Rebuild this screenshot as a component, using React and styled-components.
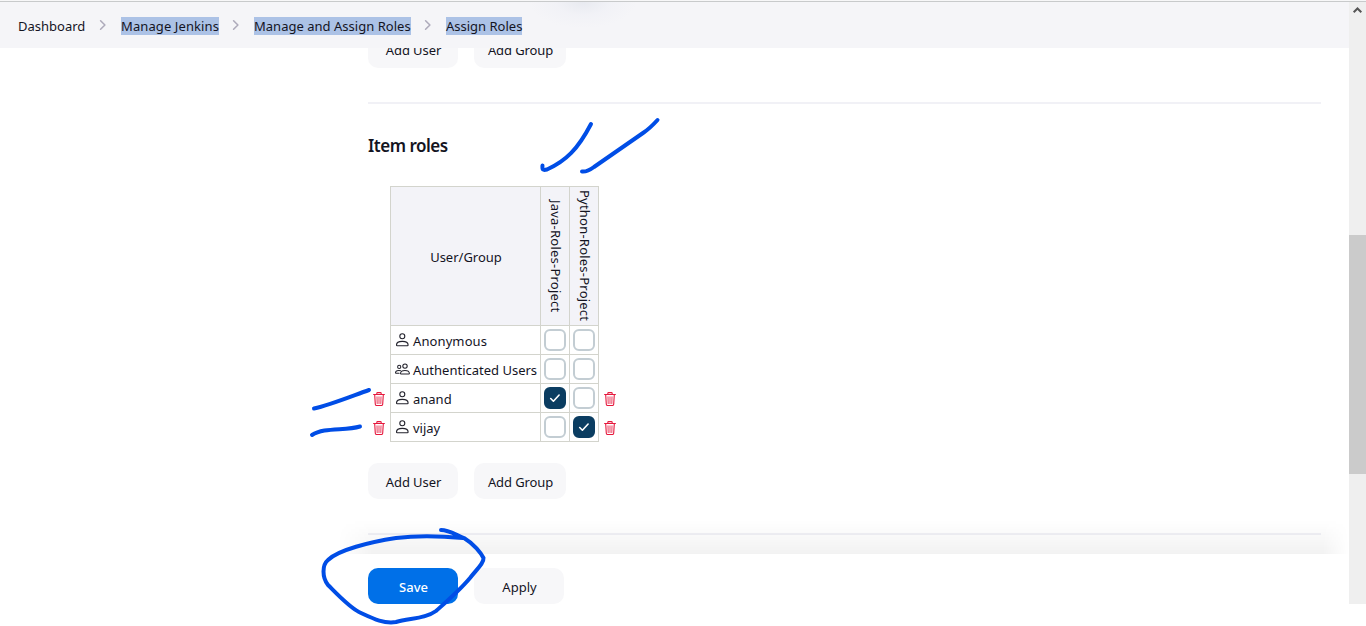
import React from 'react';
import styled, { createGlobalStyle, css } from 'styled-components';

const GlobalStyle = createGlobalStyle`
  *, *::before, *::after { box-sizing: border-box; }
  body {
    margin: 0;
    background: #fff;
    color: #14141f;
    font-family: "Noto Sans", "Open Sans", sans-serif;
    font-size: 13px;
    overflow: hidden;
  }
`;

const Page = styled.div`
  position: relative;
  width: 1366px;
  height: 626px;
  overflow: hidden;
  display: flex;
  flex-direction: column;
`;

const WindowEdge = styled.div`
  flex: none;
  height: 2px;
  background: #f7f7f8;
  border-bottom: 1px solid #c8cacb;
`;

const Frame = styled.div`
  display: flex;
  height: 602px;
`;

const Viewport = styled.div`
  width: 1349px;
  height: 602px;
  display: flex;
  flex-direction: column;
`;

const Breadcrumbs = styled.nav`
  flex: none;
  height: 46px;
  display: flex;
  align-items: center;
  padding: 0 0 0 18px;
  background:
    radial-gradient(ellipse 54px 26px at 583px 0, #e8eaf0 0%, rgba(238, 239, 245, 0.5) 50%, rgba(245, 245, 248, 0) 100%),
    #f5f5f8;
`;

const Text = styled.span`
  display: block;
  white-space: nowrap;
  letter-spacing: ${(p) => p.$ls || 0}px;
`;

const Crumb = styled(Text)`
  width: ${(p) => p.$w}px;
  height: 18px;
  margin-top: 1px;
  line-height: 19px;
  ${(p) => p.$selected && css`background: #acc2e6;`}
`;

const Separator = styled.svg`
  flex: none;
  width: 8px;
  height: 12px;
  margin: 0 14px 0 ${(p) => (p.$first ? 14 : 13)}px;
  fill: none;
  stroke: #aeabbb;
  stroke-width: 1.6;
  stroke-linecap: round;
  stroke-linejoin: round;
`;

const Main = styled.main`
  height: 506px;
  overflow: hidden;
  padding: 0 28px 0 368px;
`;

const Actions = styled.div`
  display: flex;
  gap: 16px;
  margin-top: ${(p) => p.$top || 0}px;
`;

const Button = styled.button`
  width: ${(p) => p.$w || 90}px;
  height: 36px;
  flex: none;
  display: flex;
  justify-content: center;
  align-items: center;
  border: 0;
  border-radius: 10px;
  padding: ${(p) => (p.$raised ? 0 : 2)}px 0 0 1px;
  font: inherit;
  font-weight: ${(p) => (p.$primary ? 500 : 400)};
  color: ${(p) => (p.$primary ? '#fff' : '#14141f')};
  background: ${(p) => (p.$primary ? '#0070e8' : '#f7f7f9')};
`;

const Divider = styled.div`
  height: 2px;
  margin-top: 34px;
  background: #f1f1f6;
`;

const Heading = styled.h2`
  margin: 30px 0 0;
  height: 24px;
  line-height: 24px;
  font-size: 17px;
  font-weight: 600;
  letter-spacing: -0.5px;
`;

const RoleTable = styled.div`
  display: flex;
  margin-top: 28px;
`;

const DeleteColumn = styled.div`
  width: 22px;
  display: flex;
  flex-direction: column;
  align-items: center;
  padding-top: 198px;
`;

const DeleteSlot = styled.div`
  height: 29px;
  display: flex;
  align-items: center;
  padding-top: 1px;
`;

const Matrix = styled.div`
  display: grid;
  grid-template-columns: 149px 28px 28px;
  grid-template-rows: 138px repeat(4, 28px);
  gap: 1px;
  padding: 1px;
  background: #d3d4cd;
`;

const HeadCell = styled.div`
  display: flex;
  align-items: center;
  justify-content: center;
  padding-top: 1px;
  padding-left: 1px;
  background: #f3f3f8;
  ${(p) => p.$vertical && css`
    writing-mode: vertical-rl;
    padding-top: 0;
  `}
`;

const NameCell = styled.div`
  display: flex;
  align-items: center;
  padding-left: 4px;
  background: #fff;
`;

const Name = styled(Text)`
  margin-left: 3px;
  padding-top: 1px;
`;

const CheckCell = styled.div`
  display: flex;
  align-items: center;
  justify-content: center;
  background: #fff;
`;

const Checkbox = styled.span`
  width: 22px;
  height: 22px;
  display: flex;
  align-items: center;
  justify-content: center;
  border-radius: 6px;
  border: 2px solid ${(p) => (p.$checked ? '#0b3d61' : '#c3cdd3')};
  background: ${(p) => (p.$checked ? '#0b3d61' : '#fff')};
`;

const Footer = styled.footer`
  position: relative;
  flex: none;
  height: 50px;
  padding: 14px 0 0 368px;
  background: #fff;
`;

const FooterShade = styled.div`
  position: absolute;
  left: 338px;
  right: 0;
  top: -34px;
  height: 34px;
  background: linear-gradient(to bottom, rgba(0, 0, 0, 0), rgba(0, 0, 0, 0.05));
  mask-image: linear-gradient(to right, transparent, #000 34px, #000 calc(100% - 26px), transparent);
`;

const Scrollbar = styled.div`
  width: 17px;
  height: 602px;
  background: #efefef;
  display: flex;
  flex-direction: column;
  align-items: center;
`;

const ScrollUp = styled.svg`
  width: 17px;
  height: 17px;
  fill: none;
  stroke: #555;
  stroke-width: 2;
`;

const ScrollThumb = styled.div`
  width: 17px;
  height: 239px;
  margin-top: 216px;
  background: #cbcbcb;
`;

const Ink = styled.svg`
  position: absolute;
  inset: 0;
  pointer-events: none;
  fill: none;
  stroke: #004de6;
  stroke-width: 4;
  stroke-linecap: round;
  stroke-linejoin: round;
`;

const LineIcon = styled.svg`
  flex: none;
  display: block;
  fill: none;
  stroke: ${(p) => p.$color || '#22222c'};
  stroke-linecap: round;
  stroke-linejoin: round;
`;

const PersonIcon = () => (
  <LineIcon width="15" height="16" viewBox="0 0 15 16" strokeWidth="1.1">
    <circle cx="7.3" cy="4.2" r="2.5" />
    <path d="M1.5 13c0-2.4 2.4-3.6 5.8-3.6s5.8 1.2 5.8 3.6c0 .5-.2.7-.7.7H2.200c-.5 0-.7-.2-.7-.7z" />
  </LineIcon>
);

const PeopleIcon = () => (
  <LineIcon width="15" height="16" viewBox="0 0 15 16" strokeWidth="1.05">
    <circle cx="10" cy="5.100" r="2.2" />
    <circle cx="4.2" cy="5.900" r="1.6" />
    <path d="M5.500 12.300c.2-1.900 2-2.900 4.500-2.900s4.200 1 4.400 2.900c0 .5-.2.7-.6.7H6.100c-.4 0-.6-.2-.6-.7z" />
    <path d="M5.600 9.700c-2.700-.6-5 .3-5.100 2 0 .4.100.6.400.6h3.200" />
  </LineIcon>
);

const TrashIcon = () => (
  <LineIcon width="12" height="14" viewBox="0 0 12 14" strokeWidth="1.1" $color="#e6173c">
    <path d="M.6 2.500h10.800M3.800 2.500V1.400c0-.5.3-.8.8-.8h2.800c.5 0 .8.3.8.8v1.100M1.700 2.700l.6 9.500c.1.8.6 1.300 1.300 1.300h4.800c.7 0 1.200-.5 1.300-1.300l.6-9.500" />
    <path d="M4 4.700l.2 6.700M6 4.700v6.700M8 4.700l-.2 6.700" strokeOpacity=".75" />
  </LineIcon>
);

const TickIcon = () => (
  <LineIcon width="12" height="12" viewBox="0 0 12 12" strokeWidth="1.6" $color="#fff">
    <path d="M1.700 6.500l2.700 2.700 5.700-6.200" />
  </LineIcon>
);

const Chevron = ({ first }) => (
  <Separator viewBox="0 0 8 12" $first={first}>
    <path d="M1.600 1.800L5.900 6l-4.300 4.200" />
  </Separator>
);

const crumbs = [
  { label: 'Dashboard', w: 67, ls: 0 },
  { label: 'Manage Jenkins', w: 98, ls: 0.1, selected: true },
  { label: 'Manage and Assign Roles', w: 157, ls: 0.02, selected: true },
  { label: 'Assign Roles', w: 76, ls: 0, selected: true },
];

const members = [
  { name: 'Anonymous', checks: [false, false], ls: 0.1 },
  { name: 'Authenticated Users', group: true, checks: [false, false] },
  { name: 'anand', checks: [true, false] },
  { name: 'vijay', checks: [false, true] },
];

const AddActions = ({ top, raised }) => (
  <Actions $top={top}>
    <Button $raised={raised}><Text $ls={-0.1}>Add User</Text></Button>
    <Button $raised={raised} $w={92}><Text $ls={-0.1}>Add Group</Text></Button>
  </Actions>
);

const DeleteButtons = () => (
  <DeleteColumn>
    <DeleteSlot><TrashIcon /></DeleteSlot>
    <DeleteSlot><TrashIcon /></DeleteSlot>
  </DeleteColumn>
);

export default function App() {
  return (
    <Page>
      <GlobalStyle />
      <WindowEdge />
      <Frame>
        <Viewport>
          <Breadcrumbs>
            {crumbs.map((c, i) => (
              <React.Fragment key={c.label}>
                {i > 0 && <Chevron first={i === 1} />}
                <Crumb $w={c.w} $ls={c.ls} $selected={c.selected}>{c.label}</Crumb>
              </React.Fragment>
            ))}
          </Breadcrumbs>
          <Main>
            <AddActions top={-16} raised />
            <Divider />
            <Heading>Item roles</Heading>
            <RoleTable>
              <DeleteButtons />
              <Matrix>
                <HeadCell><Text>User/Group</Text></HeadCell>
                <HeadCell $vertical><Text $ls={0.22}>Java-Roles-Project</Text></HeadCell>
                <HeadCell $vertical><Text $ls={0.22}>Python-Roles-Project</Text></HeadCell>
                {members.map((m) => (
                  <React.Fragment key={m.name}>
                    <NameCell>
                      {m.group ? <PeopleIcon /> : <PersonIcon />}
                      <Name $ls={m.ls}>{m.name}</Name>
                    </NameCell>
                    {m.checks.map((on, i) => (
                      <CheckCell key={i}>
                        <Checkbox $checked={on}>{on && <TickIcon />}</Checkbox>
                      </CheckCell>
                    ))}
                  </React.Fragment>
                ))}
              </Matrix>
              <DeleteButtons />
            </RoleTable>
            <AddActions top={21} />
            <Divider />
          </Main>
          <Footer>
            <FooterShade />
            <Actions>
              <Button $primary><Text>Save</Text></Button>
              <Button><Text>Apply</Text></Button>
            </Actions>
          </Footer>
        </Viewport>
        <Scrollbar>
          <ScrollUp viewBox="0 0 17 17">
            <path d="M4.7 10.3l3.8-3.8 3.8 3.8" />
          </ScrollUp>
          <ScrollThumb />
        </Scrollbar>
      </Frame>
      <Ink width="1366" height="626" viewBox="0 0 1366 626">
        <path d="M542.5 165.500C542 170 543 170.500 547 169.500C566 161 578 149 591 124" />
        <path d="M582 171.500C587 172 590 170 594 167L643 133C649 129 653 125 657.500 120" />
        <path d="M314 408.500C330 405 352 396 369 390" />
        <path d="M312 435C324 427 345 431 360 426.500" />
        <path d="M441 530C449 530 456 535 464 538C474 544 481 553 483.500 558C484 563 477 569 470 578C460 590 445 603 436 611C425 619 410 618 396 622C383 624 372 618 359 612C349 607 337 594 328 585C322 577 322 565 328 560C338 550 370 542 396 538C420 535 441 536 463 538" />
      </Ink>
    </Page>
  );
}
